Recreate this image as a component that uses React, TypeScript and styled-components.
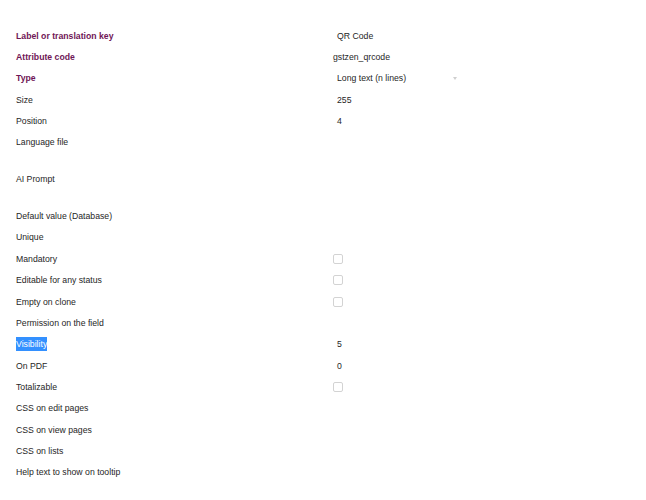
import React from "react";
import styled, { createGlobalStyle } from "styled-components";

const Global = createGlobalStyle`
  html, body { margin: 0; padding: 0; background: #ffffff; }
  body { font-family: "Liberation Sans", Arial, sans-serif; }
`;

const Page = styled.div`
  padding: 25px 0 0 16px;
  width: 630px;
  box-sizing: border-box;
`;

const Table = styled.div`
  display: grid;
  grid-template-columns: 317px 1fr;
`;

const Row = styled.div<{ $tall?: boolean }>`
  display: contents;
  & > * {
    height: ${(p) => (p.$tall ? "52.4px" : "21.35px")};
  }
`;

const Label = styled.div<{ $required?: boolean }>`
  display: flex;
  align-items: center;
  font-size: 8.7px;
  font-weight: ${(p) => (p.$required ? 700 : 400)};
  color: ${(p) => (p.$required ? "#6f1656" : "#262626")};
`;

const Selected = styled.span`
  background: #3390ff;
  color: #ffffff;
  padding: 2px 0;
`;

const Value = styled.div<{ $inset?: boolean }>`
  display: flex;
  align-items: center;
  font-size: 8.7px;
  color: #262626;
  padding-left: ${(p) => (p.$inset ? "4px" : "0")};
`;

const SelectBox = styled.div`
  display: flex;
  align-items: center;
  justify-content: space-between;
  width: 127px;
  padding-left: 4px;
  box-sizing: border-box;
`;

const Arrow = styled.span`
  width: 0;
  height: 0;
  border-left: 2.5px solid transparent;
  border-right: 2.5px solid transparent;
  border-top: 3px solid #cfcfcf;
  margin-right: 3px;
`;

const Check = styled.span`
  display: inline-block;
  width: 8px;
  height: 8px;
  border: 1px solid #d3d3d3;
  border-radius: 2px;
  background: #ffffff;
`;

type V =
  | { kind: "text"; text: string; inset?: boolean }
  | { kind: "select"; text: string }
  | { kind: "check" }
  | { kind: "none" };

const rows: { label: string; required?: boolean; tall?: boolean; selected?: boolean; value: V }[] = [
  { label: "Label or translation key", required: true, value: { kind: "text", text: "QR Code", inset: true } },
  { label: "Attribute code", required: true, value: { kind: "text", text: "gstzen_qrcode" } },
  { label: "Type", required: true, value: { kind: "select", text: "Long text (n lines)" } },
  { label: "Size", value: { kind: "text", text: "255", inset: true } },
  { label: "Position", value: { kind: "text", text: "4", inset: true } },
  { label: "Language file", value: { kind: "none" } },
  { label: "AI Prompt", tall: true, value: { kind: "none" } },
  { label: "Default value (Database)", value: { kind: "none" } },
  { label: "Unique", value: { kind: "none" } },
  { label: "Mandatory", value: { kind: "check" } },
  { label: "Editable for any status", value: { kind: "check" } },
  { label: "Empty on clone", value: { kind: "check" } },
  { label: "Permission on the field", value: { kind: "none" } },
  { label: "Visibility", selected: true, value: { kind: "text", text: "5", inset: true } },
  { label: "On PDF", value: { kind: "text", text: "0", inset: true } },
  { label: "Totalizable", value: { kind: "check" } },
  { label: "CSS on edit pages", value: { kind: "none" } },
  { label: "CSS on view pages", value: { kind: "none" } },
  { label: "CSS on lists", value: { kind: "none" } },
  { label: "Help text to show on tooltip", value: { kind: "none" } },
];

function renderValue(v: V) {
  switch (v.kind) {
    case "text":
      return <Value $inset={v.inset}>{v.text}</Value>;
    case "select":
      return (
        <Value>
          <SelectBox>
            <span>{v.text}</span>
            <Arrow />
          </SelectBox>
        </Value>
      );
    case "check":
      return (
        <Value>
          <Check />
        </Value>
      );
    default:
      return <Value />;
  }
}

export default function App() {
  return (
    <>
      <Global />
      <Page>
        <Table>
          {rows.map((r) => (
            <Row key={r.label} $tall={r.tall}>
              <Label $required={r.required}>
                {r.selected ? <Selected>{r.label}</Selected> : r.label}
              </Label>
              {renderValue(r.value)}
            </Row>
          ))}
        </Table>
      </Page>
    </>
  );
}
